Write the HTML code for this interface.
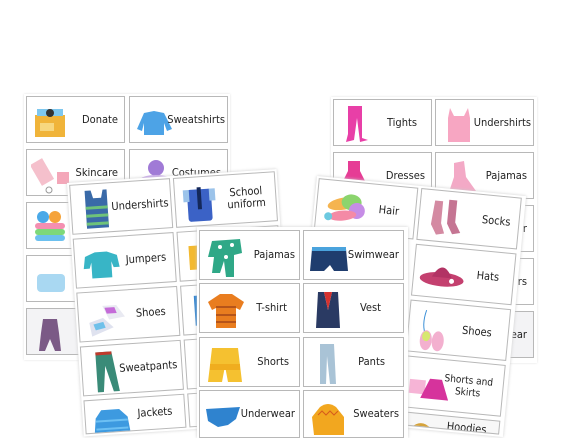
<!DOCTYPE html>
<html style="overflow:hidden;height:438px"><head><meta charset="utf-8"><style>
html,body{margin:0;width:569px;height:438px;overflow:hidden;}
body{background:#fff;position:relative;font-family:"DejaVu Sans Condensed","Liberation Sans Narrow","Liberation Sans",sans-serif;}
.s{position:absolute;background:#fff;transform-origin:0 0;overflow:hidden}
.c{position:absolute;width:99px;height:47px;border:1px solid #b8b8b8;background:#fff;box-sizing:border-box;overflow:hidden}
.c .l{position:absolute;right:6px;top:0;height:100%;display:flex;align-items:center;text-align:center;font-size:11px;line-height:12px;color:#222;letter-spacing:0}
.c svg{position:absolute;left:4px;top:4px}
</style></head><body>

<div class="s" style="left:24px;top:94px;width:206px;height:266px;box-shadow:0 0 2px #ddd">
 <div class="c" style="left:2px;top:2px"><svg width="40" height="40"><rect x="4" y="14" width="30" height="22" fill="#f0b43a"/><rect x="6" y="8" width="26" height="7" fill="#7ec7ee"/><circle cx="19" cy="12" r="4" fill="#333"/><rect x="9" y="22" width="14" height="8" fill="#f7d77f"/></svg><div class="l">Donate</div></div>
 <div class="c" style="left:105px;top:2px"><svg width="40" height="40"><path d="M3 28 L10 12 L20 10 L30 12 L38 28 L33 30 L30 22 L30 34 L10 34 L10 22 L8 30Z" fill="#4da3e6"/></svg><div class="l" style="right:2px">Sweatshirts</div></div>
 <div class="c" style="left:2px;top:55px"><svg width="44" height="42"><rect x="4" y="6" width="14" height="24" transform="rotate(-30 11 18)" fill="#f5c0cc"/><rect x="26" y="18" width="12" height="12" fill="#f4a7b9"/><circle cx="18" cy="36" r="3" fill="none" stroke="#999"/></svg><div class="l">Skincare</div></div>
 <div class="c" style="left:105px;top:55px"><svg width="40" height="40"><circle cx="22" cy="14" r="8" fill="#a07ad6"/><ellipse cx="22" cy="26" rx="16" ry="5" fill="#c9a8ee"/></svg><div class="l">Costumes</div></div>
 <div class="c" style="left:2px;top:108px"><svg width="40" height="40"><circle cx="12" cy="10" r="6" fill="#4aa9e8"/><circle cx="24" cy="10" r="6" fill="#f5a33a"/><rect x="4" y="16" width="30" height="6" rx="3" fill="#f48fb1"/><rect x="4" y="22" width="30" height="6" rx="3" fill="#7dd87a"/><rect x="4" y="28" width="30" height="6" rx="3" fill="#6cc0ef"/></svg></div>
 <div class="c" style="left:2px;top:161px"><svg width="40" height="40"><rect x="6" y="14" width="28" height="18" rx="4" fill="#a9d8f2"/></svg></div>
 <div class="c" style="left:2px;top:214px;background:#f3f3f5"><svg width="40" height="40"><path d="M12 6 L26 6 L28 20 L30 38 L24 38 L19 26 L14 38 L8 38 L10 20Z" fill="#7b5a86"/></svg><div class="l" style="right:auto;left:60px">Dance<br>gym</div></div>
</div>

<div class="s" style="left:331px;top:97px;width:206px;height:266px;box-shadow:0 0 2px #ddd">
 <div class="c" style="left:2px;top:2px"><svg width="40" height="40"><path d="M10 2 L24 2 L24 34 L30 36 L22 38 L19 14 L16 36 L8 38 L10 30Z" fill="#e83fa7"/></svg><div class="l" style="right:14px">Tights</div></div>
 <div class="c" style="left:104px;top:2px"><svg width="40" height="40"><path d="M10 4 L14 12 L24 12 L28 4 L30 14 L30 38 L8 38 L8 14Z" fill="#f7a6c2"/></svg><div class="l" style="right:2px">Undershirts</div></div>
 <div class="c" style="left:2px;top:55px"><svg width="40" height="40"><path d="M10 4 L22 4 L22 14 L28 26 L4 26 L10 14Z" fill="#e63c95"/></svg><div class="l">Dresses</div></div>
 <div class="c" style="left:104px;top:55px"><svg width="40" height="40"><path d="M14 6 L24 4 L26 20 L36 34 L22 36 L10 32 L14 20Z" fill="#f3a9c6"/></svg><div class="l">Pajamas</div></div>
 <div class="c" style="left:104px;top:108px"><div class="l">Underwear</div></div>
 <div class="c" style="left:104px;top:161px"><div class="l">Sweaters</div></div>
 <div class="c" style="left:104px;top:214px;background:#f3f3f5"><div class="l">Sleepwear</div></div>
</div>

<div class="s" style="left:67px;top:183px;width:210px;height:254px;transform:rotate(-3.8deg);box-shadow:0 0 3px #ccc">
 <div class="c" style="left:2px;top:2px;width:101px;height:50px"><svg width="40" height="44"><path d="M10 2 L16 2 L18 10 L26 10 L28 2 L32 2 L32 40 L10 40Z" fill="#3a6aa8"/><rect x="10" y="18" width="22" height="3" fill="#6ec27a"/><rect x="10" y="26" width="22" height="3" fill="#6ec27a"/><rect x="10" y="34" width="22" height="3" fill="#6ec27a"/></svg><div class="l" style="right:2px">Undershirts</div></div>
 <div class="c" style="left:106px;top:2px;width:102px;height:50px"><svg width="40" height="44"><rect x="8" y="8" width="24" height="32" rx="3" fill="#3b62c6"/><rect x="18" y="6" width="4" height="22" fill="#14285a"/><rect x="4" y="8" width="6" height="12" fill="#9bc3ea"/><rect x="30" y="8" width="6" height="12" fill="#9bc3ea"/></svg><div class="l" style="right:10px">School<br>uniform</div></div>
 <div class="c" style="left:2px;top:56px;width:101px;height:50px"><svg width="44" height="44"><path d="M6 14 L16 10 L28 10 L38 14 L40 26 L34 26 L32 20 L32 36 L12 36 L12 20 L10 26 L4 26Z" fill="#38b5c6"/></svg><div class="l" style="right:8px">Jumpers</div></div>
 <div class="c" style="left:106px;top:56px;width:102px;height:50px"><svg width="40" height="44"><rect x="6" y="10" width="20" height="24" fill="#f3b92f"/></svg></div>
 <div class="c" style="left:2px;top:110px;width:101px;height:50px"><svg width="48" height="46"><path d="M20 10 L34 10 L42 22 L26 24Z" fill="#e9eaf2"/><path d="M22 12 L32 12 L34 18 L24 18Z" fill="#c46bd8"/><path d="M6 26 L20 22 L30 32 L8 40Z" fill="#dfe2ef"/><path d="M10 28 L20 26 L22 32 L12 34Z" fill="#6fc0ea"/></svg><div class="l" style="right:12px">Shoes</div></div>
 <div class="c" style="left:106px;top:110px;width:102px;height:50px"><svg width="40" height="44"><rect x="8" y="6" width="14" height="30" fill="#2f83d0"/></svg></div>
 <div class="c" style="left:2px;top:164px;width:101px;height:50px"><svg width="40" height="46"><path d="M10 2 L26 2 L32 42 L26 42 L19 16 L16 42 L10 42Z" fill="#3a8b78"/><rect x="10" y="2" width="16" height="3" fill="#c0392b"/></svg><div class="l" style="right:4px">Sweatpants</div></div>
 <div class="c" style="left:106px;top:164px;width:102px;height:50px"><svg width="40" height="44"><rect x="8" y="8" width="14" height="30" fill="#2a64b5"/></svg></div>
 <div class="c" style="left:2px;top:218px;width:101px;height:34px"><svg width="44" height="30"><path d="M12 6 L30 6 L38 14 L40 30 L4 30 L6 14Z" fill="#3d9ae0"/><rect x="6" y="16" width="32" height="2" fill="#6dc0f3"/><rect x="6" y="24" width="32" height="2" fill="#6dc0f3"/></svg><div class="l" style="right:12px">Jackets</div></div>
 <div class="c" style="left:106px;top:218px;width:102px;height:34px"></div>
</div>

<div class="s" style="left:317px;top:176px;width:210px;height:242px;transform:rotate(5.5deg);box-shadow:0 0 3px #ccc">
 <div class="c" style="left:2px;top:2px;width:100px;height:52px"><svg width="50" height="46"><ellipse cx="22" cy="18" rx="16" ry="6" fill="#f5b450" transform="rotate(-15 22 18)"/><ellipse cx="30" cy="16" rx="10" ry="8" fill="#8bd46d"/><ellipse cx="36" cy="24" rx="8" ry="8" fill="#c68de6"/><ellipse cx="22" cy="30" rx="14" ry="5" fill="#f48aa6" transform="rotate(-10 22 30)"/><circle cx="8" cy="32" r="4" fill="#6cc9e0"/></svg><div class="l" style="right:16px">Hair</div></div>
 <div class="c" style="left:105px;top:2px;width:101px;height:52px"><svg width="44" height="46"><path d="M10 6 L18 6 L18 28 L22 38 L14 40 L8 30Z" fill="#d48aa2"/><path d="M24 4 L32 4 L32 26 L38 36 L30 38 L24 28Z" fill="#c57593"/></svg><div class="l" style="right:8px">Socks</div></div>
 <div class="c" style="left:105px;top:58px;width:101px;height:52px"><svg width="50" height="46"><ellipse cx="24" cy="28" rx="22" ry="7" fill="#c4406f"/><path d="M14 26 Q24 6 34 26Z" fill="#b23364"/><circle cx="34" cy="29" r="2.5" fill="#fff"/></svg><div class="l" style="right:14px">Hats</div></div>
 <div class="c" style="left:105px;top:114px;width:101px;height:52px"><svg width="44" height="46"><path d="M12 4 Q8 20 14 30" stroke="#3a8fd6" fill="none"/><ellipse cx="14" cy="34" rx="6" ry="10" fill="#f3b0cf"/><ellipse cx="26" cy="34" rx="6" ry="10" fill="#f3b0cf"/><ellipse cx="14" cy="30" rx="4" ry="5" fill="#d7e870"/></svg><div class="l" style="right:16px">Shoes</div></div>
 <div class="c" style="left:105px;top:170px;width:101px;height:52px"><svg width="44" height="46"><rect x="2" y="18" width="16" height="14" fill="#f6b4d6"/><path d="M22 16 L34 16 L42 36 L14 36Z" fill="#d6339c"/></svg><div class="l" style="right:10px;font-size:10px">Shorts and<br>Skirts</div></div>
 <div class="c" style="left:105px;top:226px;width:101px;height:14px;background:#f7f7f7"><svg width="44" height="12"><path d="M8 10 Q18 0 28 10 L30 12 L6 12Z" fill="#d6a33a"/></svg><div class="l" style="right:12px;height:auto;top:4px">Hoodies</div></div>
</div>

<div class="s" style="left:197px;top:227px;width:211px;height:211px;box-shadow:0 0 3px #ccc">
 <div class="c" style="left:2px;top:3px;width:101px;height:50px"><svg width="44" height="44"><path d="M8 6 L36 4 L38 18 L30 20 L30 42 L22 42 L20 26 L16 38 L8 38 L10 22 L4 22Z" fill="#2fa887"/><circle cx="16" cy="12" r="2" fill="#fff"/><circle cx="28" cy="10" r="2" fill="#fff"/><circle cx="22" cy="22" r="2" fill="#fff"/></svg><div class="l" style="right:4px">Pajamas</div></div>
 <div class="c" style="left:106px;top:3px;width:101px;height:50px"><svg width="44" height="44"><path d="M4 14 L38 14 L40 36 L26 36 L22 30 L16 36 L2 36Z" fill="#1f3d6e"/><rect x="4" y="12" width="34" height="4" fill="#4aa3dd"/></svg><div class="l" style="right:4px">Swimwear</div></div>
 <div class="c" style="left:2px;top:56px;width:101px;height:50px"><svg width="44" height="44"><path d="M4 14 L16 6 L28 6 L40 14 L36 22 L32 20 L32 40 L12 40 L12 20 L8 22Z" fill="#e97d1f"/><rect x="12" y="18" width="20" height="2" fill="#b5541a"/><rect x="12" y="26" width="20" height="2" fill="#b5541a"/><rect x="12" y="33" width="20" height="2" fill="#b5541a"/></svg><div class="l" style="right:12px">T-shirt</div></div>
 <div class="c" style="left:106px;top:56px;width:101px;height:50px"><svg width="44" height="44"><path d="M10 4 L16 4 L20 22 L24 4 L30 4 L32 40 L8 40Z" fill="#2a3a63"/><path d="M16 4 L24 4 L20 22Z" fill="#d6322e"/></svg><div class="l" style="right:22px">Vest</div></div>
 <div class="c" style="left:2px;top:110px;width:101px;height:50px"><svg width="44" height="44"><path d="M8 6 L34 6 L38 40 L24 40 L21 24 L18 40 L4 40Z" fill="#f5c130"/><rect x="6" y="22" width="30" height="6" fill="#f0ad1f"/></svg><div class="l" style="right:10px">Shorts</div></div>
 <div class="c" style="left:106px;top:110px;width:101px;height:50px"><svg width="44" height="44"><path d="M12 2 L26 2 L28 42 L22 42 L19 14 L18 42 L12 42Z" fill="#a9c3d6"/></svg><div class="l" style="right:18px">Pants</div></div>
 <div class="c" style="left:2px;top:163px;width:101px;height:48px"><svg width="44" height="40"><path d="M2 14 L36 12 L32 24 L24 30 L14 32 L4 26Z" fill="#2f83cf"/></svg><div class="l" style="right:4px">Underwear</div></div>
 <div class="c" style="left:106px;top:163px;width:101px;height:48px"><svg width="44" height="40"><path d="M12 12 Q20 6 28 12 L36 22 L36 40 L6 40 L4 22Z" fill="#f2a71f"/><path d="M10 20 L14 16 L18 20 L22 16 L26 20 L30 16" stroke="#d65a1c" fill="none"/></svg><div class="l" style="right:4px">Sweaters</div></div>
</div>
</body></html>
